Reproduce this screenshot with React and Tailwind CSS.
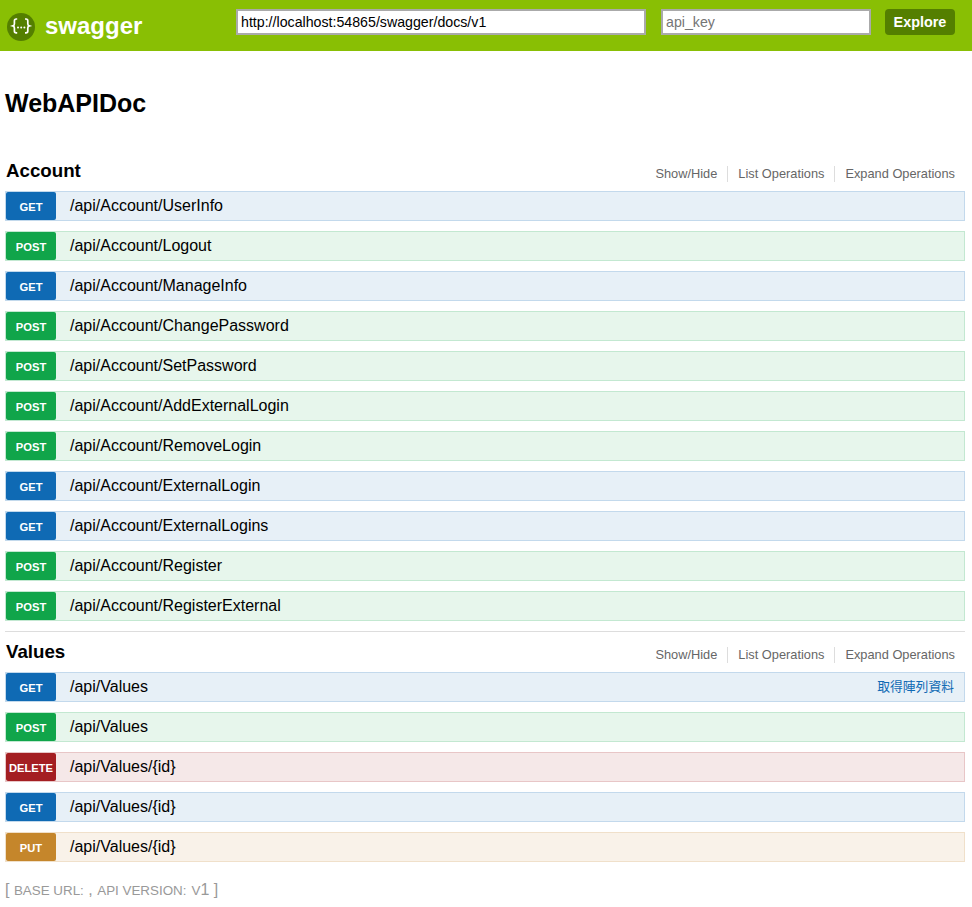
import React from "react";

const styles = {
  GET: { badge: "bg-[#0f6ab4]", row: "bg-[#e7f0f7] border-[#c3d9ec]" },
  POST: { badge: "bg-[#10a54a]", row: "bg-[#e7f6ec] border-[#c3e8d1]" },
  DELETE: { badge: "bg-[#a41e22]", row: "bg-[#f5e8e8] border-[#e8c6c7]" },
  PUT: { badge: "bg-[#c5862b]", row: "bg-[#f9f2e9] border-[#f0e0ca]" },
};

const account = [
  ["GET", "/api/Account/UserInfo"],
  ["POST", "/api/Account/Logout"],
  ["GET", "/api/Account/ManageInfo"],
  ["POST", "/api/Account/ChangePassword"],
  ["POST", "/api/Account/SetPassword"],
  ["POST", "/api/Account/AddExternalLogin"],
  ["POST", "/api/Account/RemoveLogin"],
  ["GET", "/api/Account/ExternalLogin"],
  ["GET", "/api/Account/ExternalLogins"],
  ["POST", "/api/Account/Register"],
  ["POST", "/api/Account/RegisterExternal"],
];

const values = [
  ["GET", "/api/Values", "取得陣列資料"],
  ["POST", "/api/Values"],
  ["DELETE", "/api/Values/{id}"],
  ["GET", "/api/Values/{id}"],
  ["PUT", "/api/Values/{id}"],
];

function Logo() {
  return (
    <svg width="28" height="28" viewBox="0 0 28 28" className="shrink-0">
      <circle cx="14" cy="14" r="14" fill="#547f00" />
      <path d="M10.2 6h-1c-1.2 0-1.8.7-1.8 1.9v2.8c0 1.2-.5 1.9-1.5 2.2 1 .3 1.5 1 1.5 2.2v2.8c0 1.2.6 1.9 1.8 1.9h1" fill="none" stroke="#fff" strokeWidth="1.7" />
      <path d="M18 6h1c1.2 0 1.8.7 1.8 1.9v2.8c0 1.2.5 1.9 1.5 2.2-1 .3-1.5 1-1.5 2.2v2.8c0 1.2-.6 1.9-1.8 1.9h-1" fill="none" stroke="#fff" strokeWidth="1.7" />
      <circle cx="11" cy="14.6" r="1" fill="#fff" />
      <circle cx="14.2" cy="14.6" r="1" fill="#fff" />
      <circle cx="17.4" cy="14.6" r="1" fill="#fff" />
    </svg>
  );
}

function Row({ method, path, note }) {
  const s = styles[method];
  return (
    <div className={`flex items-stretch h-[30px] border ${s.row}`}>
      <span className={`w-[50px] shrink-0 rounded-[2px] flex items-center justify-center pt-[3px] text-white font-bold text-[11.2px] ${s.badge}`}>
        {method}
      </span>
      <span className="flex-1 pl-[14px] text-[16px] leading-[27px] text-black">{path}</span>
      {note && (
        <span className="pr-[10px] text-[12.8px] leading-[27px] text-[#0f6ab4]" style={{ fontFamily: '"Liberation Sans", "Noto Sans CJK TC", sans-serif' }}>
          {note}
        </span>
      )}
    </div>
  );
}

function Section({ title, rows }) {
  return (
    <section>
      <div className="flex items-center justify-between h-[40px] pl-[1px]">
        <h2 className="text-[18.72px] font-bold text-black">{title}</h2>
        <ul className="flex items-center text-[12.8px] text-[#666] pr-[10px] pt-[6px]">
          <li className="pr-[10px] leading-[16px]">Show/Hide</li>
          <li className="px-[10px] leading-[16px] border-l border-[#ddd]">List Operations</li>
          <li className="pl-[10px] leading-[16px] border-l border-[#ddd]">Expand Operations</li>
        </ul>
      </div>
      <div className="flex flex-col gap-[10px]">
        {rows.map((r, i) => (
          <Row key={i} method={r[0]} path={r[1]} note={r[2]} />
        ))}
      </div>
    </section>
  );
}

export default function App() {
  return (
    <div className="w-[972px] min-h-[907px] bg-white" style={{ fontFamily: '"Liberation Sans", Arial, sans-serif' }}>
      <header className="h-[51px] bg-[#89bf04] flex items-start pt-[9px]">
        <div className="w-[236px] shrink-0 flex items-center gap-[10px] pl-[7px] pt-[4px]">
          <Logo />
          <span className="text-white font-bold text-[24px] leading-[26px] pb-[2px]">swagger</span>
        </div>
        <input
          readOnly
          value="http://localhost:54865/swagger/docs/v1"
          className="w-[410px] h-[26px] bg-white border-2 border-[#aaa] px-[3px] text-[14.2px] text-black outline-none"
        />
        <input
          readOnly
          placeholder="api_key"
          className="ml-[15px] w-[210px] h-[26px] bg-white border-2 border-[#aaa] px-[3px] text-[14.2px] text-black placeholder:text-[#757575] outline-none"
        />
        <button className="ml-[14px] w-[70px] h-[26px] rounded-[4px] bg-[#547f00] text-white font-bold text-[14.4px] pt-[2px]">
          Explore
        </button>
      </header>
      <main className="px-[5px] w-[970px]">
        <h1 className="text-[25px] font-bold text-black leading-[30px] pt-[37px] h-[100px]">WebAPIDoc</h1>
        <Section title="Account" rows={account} />
        <div className="mt-[10px] border-t border-[#ddd]" />
        <Section title="Values" rows={values} />
        <p className="mt-[18px] text-[#999] text-[16px] leading-[20px]">
          [ <span className="text-[13.4px]">BASE URL:</span> , <span className="text-[13.4px]">API VERSION:</span>
          <span className="ml-[5px] text-[13.4px]">V</span>1 ]
        </p>
      </main>
    </div>
  );
}
